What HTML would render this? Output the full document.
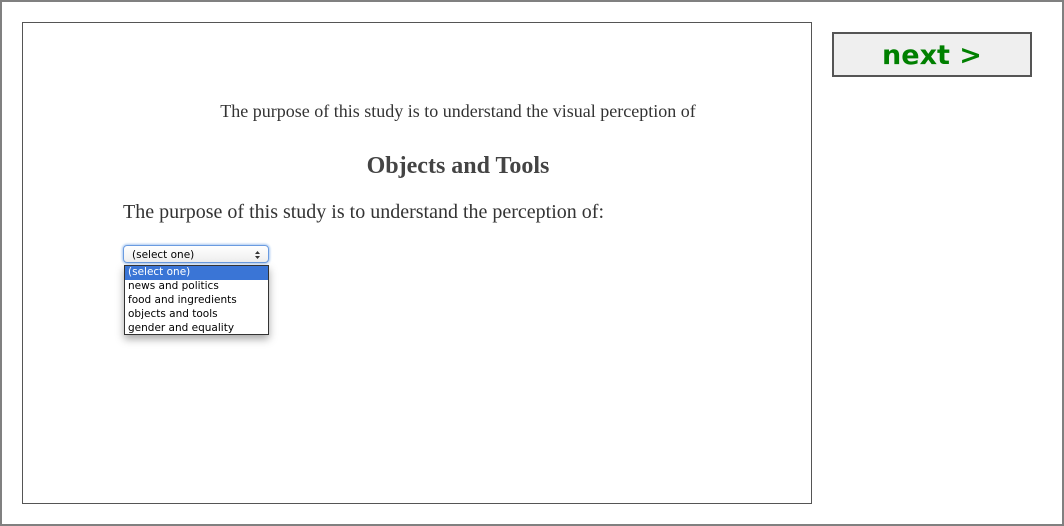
<!DOCTYPE html>
<html><head><style>
html,body{margin:0;padding:0;width:1064px;height:526px;overflow:hidden;background:#fff}
.outer{position:absolute;left:0;top:0;width:1060px;height:522px;border:2px solid #808080}
.inner{position:absolute;left:22px;top:22px;width:788px;height:480px;border:1px solid #555;font-family:"Liberation Serif",serif;color:#444}
.t1{position:absolute;left:0;width:870px;top:78px;text-align:center;font-size:18px;color:#333}
.t2{position:absolute;left:0;width:870px;top:130px;text-align:center;font-size:24px;font-weight:bold;color:#444}
.t3{position:absolute;left:100px;top:178px;font-size:20px;color:#333}
.sel{position:absolute;left:100px;top:222px;width:146px;height:18px;border:1px solid #6a9be0;border-radius:4px;box-shadow:0 0 2px 1px #a8c8f0;background:linear-gradient(#fff,#eee);font:10.5px "DejaVu Sans",sans-serif;line-height:18px;color:#000;padding-left:8px;box-sizing:border-box}
.sel .ar{position:absolute;right:8px;top:5px;width:5px;height:8px}
.list{position:absolute;left:101px;top:242px;width:145px;height:70px;border:1px solid #333;background:#fff;box-shadow:0 4px 8px rgba(0,0,0,.35);font:10.5px "DejaVu Sans",sans-serif;color:#000;box-sizing:border-box}
.list div{height:14px;line-height:13px;padding-left:3px}
.list .a{background:#3a75d6;color:#fff}
.btn{position:absolute;left:832px;top:32px;width:196px;height:41px;border:2px solid #555;background:#efefef;text-align:center;font:bold 27px "DejaVu Sans","Liberation Sans",sans-serif;color:#008000;line-height:43px}
</style></head><body>
<div class="outer"></div>
<div class="inner">
<div class="t1">The purpose of this study is to understand the visual perception of</div>
<div class="t2">Objects and Tools</div>
<div class="t3">The purpose of this study is to understand the perception of:</div>
<div class="sel">(select one)<svg class="ar" viewBox="0 0 5 8"><path d="M0 3L2.5 0L5 3Z M0 5L2.5 8L5 5Z" fill="#333"/></svg></div>
<div class="list"><div class="a">(select one)</div><div>news and politics</div><div>food and ingredients</div><div>objects and tools</div><div>gender and equality</div></div>
</div>
<div class="btn">next &gt;</div>
</body></html>
